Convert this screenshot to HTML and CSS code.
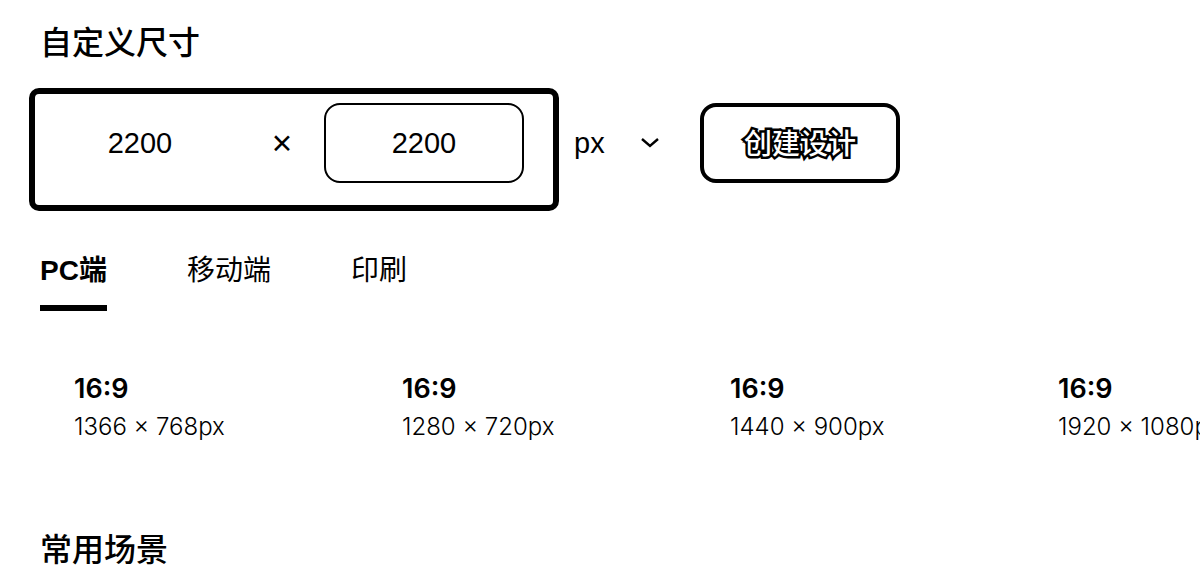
FILE: index.html
```html
<!DOCTYPE html>
<html lang="zh-CN">
<head>
<meta charset="utf-8">
<meta name="viewport" content="width=device-width, initial-scale=1">
<title>自定义尺寸</title>
<link rel="stylesheet" href="styles.css">
</head>
<body>
<main class="page">
  <h2 class="title">自定义尺寸</h2>
  <form class="size-form">
    <div class="size-frame">
      <input class="size-input size-input-plain" type="text" inputmode="numeric" aria-label="宽度" value="2200">
      <span class="times">×</span>
      <input class="size-input" type="text" inputmode="numeric" aria-label="高度" value="2200">
    </div>
    <div class="unit">
      <select class="unit-select" aria-label="单位"><option>px</option></select>
      <svg class="chevron" viewBox="0 0 18 12" aria-hidden="true"><path d="M1 2 L9 9 L17 2"/></svg>
    </div>
    <button class="create" type="button">创建设计</button>
  </form>
  <nav class="tabs">
    <button class="tab tab-active" type="button">PC端</button>
    <button class="tab" type="button">移动端</button>
    <button class="tab" type="button">印刷</button>
  </nav>
  <ul class="presets">
    <li class="preset"><h3 class="ratio">16:9</h3><p class="dims">1366 × 768px</p></li>
    <li class="preset"><h3 class="ratio">16:9</h3><p class="dims">1280 × 720px</p></li>
    <li class="preset"><h3 class="ratio">16:9</h3><p class="dims">1440 × 900px</p></li>
    <li class="preset"><h3 class="ratio">16:9</h3><p class="dims">1920 × 1080px</p></li>
  </ul>
  <h2 class="title">常用场景</h2>
</main>
</body>
</html>
```
FILE: styles.css
```css
* {
  box-sizing: border-box;
}

body {
  margin: 0;
  background: #fff;
  color: #000;
  font-family: "Liberation Sans", "Noto Sans CJK SC", sans-serif;
  font-size: 28px;
}

.page {
  padding: 19px 0 0 40px;
  overflow: hidden;
}

.title {
  margin: 0;
  font-size: 32px;
  font-weight: 500;
  line-height: 48px;
}

.size-form {
  display: flex;
  align-items: flex-start;
  margin: 21px 0 0 -11px;
}

.size-frame {
  display: flex;
  align-items: center;
  padding: 9px 29px 22px 5px;
  border: 6px solid #000;
  border-radius: 10px;
}

.size-input {
  width: 200px;
  height: 80px;
  padding: 0;
  border: 2px solid #000;
  border-radius: 16px;
  background: #fff;
  color: #000;
  font: inherit;
  font-size: 29px;
  text-align: center;
}

.size-input-plain {
  border-color: transparent;
}

.times {
  width: 84px;
  font-size: 35px;
  text-align: center;
}

.unit {
  display: grid;
  align-items: center;
  width: 85px;
  margin: 15px 0 0 15px;
}

.unit-select {
  grid-area: 1 / 1;
  height: 80px;
  padding: 0;
  border: 0;
  appearance: none;
  background: none;
  color: #000;
  font: inherit;
  font-size: 29px;
}

.chevron {
  grid-area: 1 / 1;
  justify-self: end;
  width: 18px;
  height: 12px;
  fill: none;
  stroke: #000;
  stroke-width: 2.4;
  pointer-events: none;
}

.create {
  width: 200px;
  height: 80px;
  margin: 15px 0 0 41px;
  padding: 0 0 2px;
  border: 4px solid #000;
  border-radius: 16px;
  background: #fff;
  color: #fff;
  font: inherit;
  font-weight: 500;
  paint-order: stroke fill;
  -webkit-text-stroke: 5px #000;
}

.tabs {
  display: flex;
  gap: 80px;
  margin-top: 37px;
}

.tab {
  height: 63px;
  padding: 0 0 18px;
  border: 0;
  border-bottom: 6px solid transparent;
  background: none;
  color: #000;
  font: inherit;
}

.tab-active {
  border-color: #000;
  font-weight: 600;
}

.presets {
  display: grid;
  grid-template-columns: repeat(4, 304px);
  gap: 24px;
  margin: 34px 0 0;
  padding: 0;
  list-style: none;
}

.preset {
  padding: 24px 0 81px 34px;
}

.ratio {
  margin: 0;
  font-family: Inter, "Noto Sans CJK SC", sans-serif;
  font-size: 27px;
  font-weight: 600;
  line-height: 40px;
}

.dims {
  margin: 0;
  font-family: Inter, "Noto Sans CJK SC", sans-serif;
  font-size: 24px;
  font-weight: 300;
  line-height: 36px;
}
```
